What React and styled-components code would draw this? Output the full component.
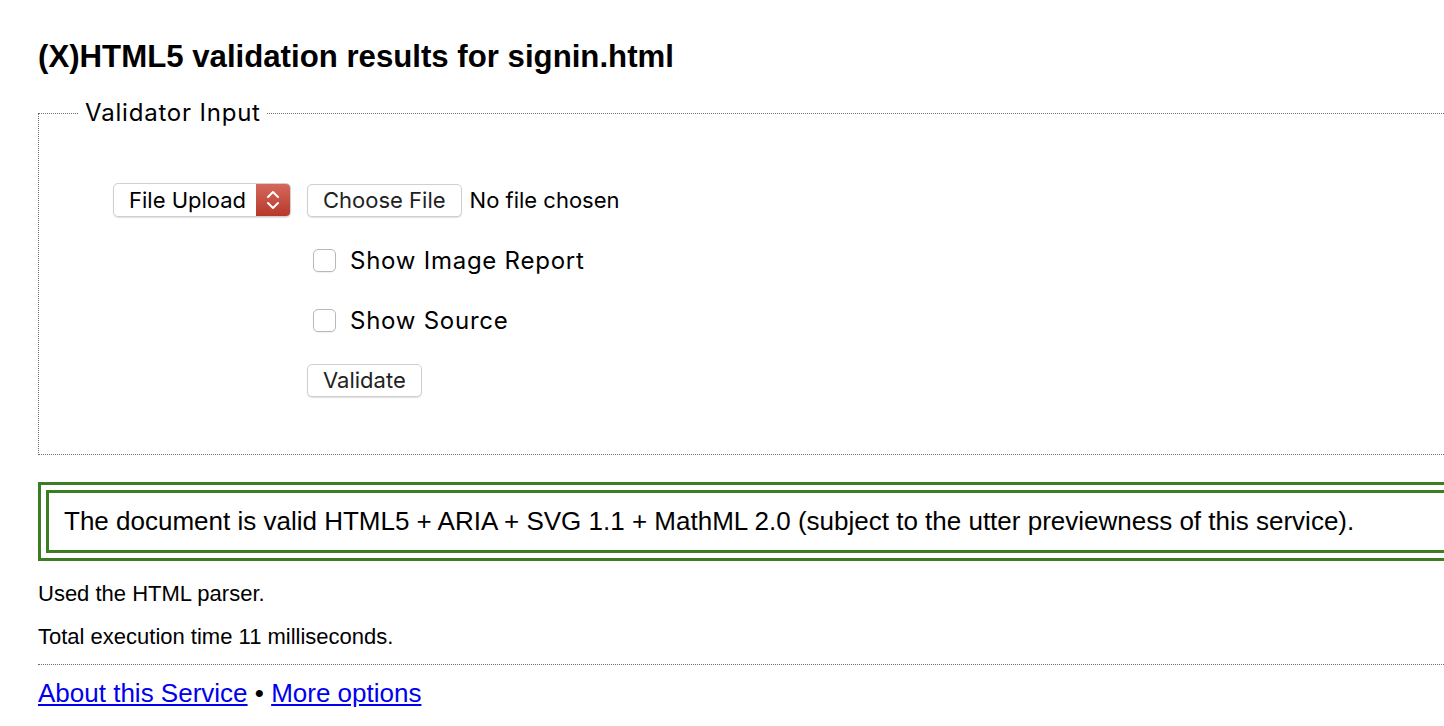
import React from 'react';
import styled, { createGlobalStyle } from "styled-components";

const Global = createGlobalStyle`
    html, body {
        margin: 0;
        padding: 0;
        overflow: hidden;
        background: #fff;
    }
    body {
        font-family: "Liberation Sans", Arial, sans-serif;
        color: #000;
    }
`;

const Page = styled.div`
    width: 1480px;
    padding: 39px 0 0 38px;
`;

const Title = styled.h1`
    margin: 0;
    font-size: 31.2px;
    line-height: 36px;
    font-weight: bold;
`;

const InputBox = styled.fieldset`
    margin: 24px 0 0 0;
    padding: 43px 0 44px 0;
    border: 1px dotted #707070;
    min-width: 0;
`;

const Legend = styled.legend`
    margin-left: 40px;
    padding: 0 6px;
    font-family: Inter, "Liberation Sans", sans-serif;
    font-size: 24px;
    letter-spacing: 0.8px;
    line-height: 28px;
`;

const Form = styled.div`
    margin-left: 74px;
    display: grid;
    grid-template-columns: 178px auto;
    grid-auto-rows: 60px;
    column-gap: 16px;
    align-items: center;
    font-family: Inter, "Liberation Sans", sans-serif;
`;

const Select = styled.div`
    display: flex;
    height: 34px;
    box-sizing: border-box;
    border: 1px solid #cfcfcf;
    border-radius: 5px;
    box-shadow: 0 1px 1px rgba(0,0,0,0.12);
    overflow: hidden;
`;

const SelectText = styled.span`
    flex: 1;
    padding-left: 15px;
    font-size: 22px;
    line-height: 32px;
`;

const SelectArrow = styled.span`
    width: 34px;
    display: flex;
    align-items: center;
    justify-content: center;
    background: linear-gradient(#d4685c, #b7382a);
`;

const Cell = styled.div`
    grid-column: 2;
    display: flex;
    align-items: center;
`;

const Button = styled.div`
    height: 33px;
    box-sizing: border-box;
    padding: 0 15px;
    border: 1px solid #cfcfcf;
    border-radius: 5px;
    box-shadow: 0 1px 1px rgba(0,0,0,0.12);
    font-size: 22px;
    line-height: 31px;
    color: #222;
    background: #fff;
`;

const Plain = styled.span`
    margin-left: 8px;
    font-size: 22px;
`;

const Check = styled.span`
    width: 23px;
    height: 23px;
    box-sizing: border-box;
    margin-left: 6px;
    border: 1px solid #b8b8b8;
    border-radius: 5px;
    box-shadow: 0 1px 1px rgba(0,0,0,0.06);
`;

const CheckLabel = styled.span`
    margin-left: 14px;
    font-size: 24px;
    letter-spacing: 0.75px;
`;

const Result = styled.div`
    margin-top: 27px;
    border: 3px solid #3b7d23;
    border-right: none;
    padding: 5px 0 5px 5px;
`;

const ResultInner = styled.p`
    margin: 0;
    border: 3px solid #3b7d23;
    border-right: none;
    padding: 13px 0 14px 15px;
    font-size: 26px;
    line-height: 30px;
`;

const Note = styled.p`
    margin: ${(p) => p.$top}px 0 0 0;
    font-size: 22px;
    line-height: 26px;
`;

const Rule = styled.hr`
    margin: 14px 0 0 0;
    border: none;
    border-top: 1px dotted #707070;
`;

const Footer = styled.p`
    margin: 13px 0 0 0;
    font-size: 26px;
    line-height: 30px;
`;

const Link = styled.a`
    color: #0000ee;
    text-decoration: underline;
`;

const Arrows = () => (
    <svg width="14" height="22" viewBox="0 0 14 22" fill="none" stroke="#fff" strokeWidth="2" strokeLinecap="round" strokeLinejoin="round">
        <polyline points="2,8 7,3 12,8" />
        <polyline points="2,14 7,19 12,14" />
    </svg>
);

const App = () => {
    return (
        <>
        <Global />
        <Page>
            <Title>(X)HTML5 validation results for signin.html</Title>

            <InputBox>
                <Legend>Validator Input</Legend>
                <Form>
                    <Select>
                        <SelectText>File Upload</SelectText>
                        <SelectArrow><Arrows /></SelectArrow>
                    </Select>
                    <Cell>
                        <Button>Choose File</Button>
                        <Plain>No file chosen</Plain>
                    </Cell>
                    <Cell>
                        <Check />
                        <CheckLabel>Show Image Report</CheckLabel>
                    </Cell>
                    <Cell>
                        <Check />
                        <CheckLabel>Show Source</CheckLabel>
                    </Cell>
                    <Cell>
                        <Button>Validate</Button>
                    </Cell>
                </Form>
            </InputBox>

            <Result>
                <ResultInner>The document is valid HTML5 + ARIA + SVG 1.1 + MathML 2.0 (subject to the utter previewness of this service).</ResultInner>
            </Result>

            <Note $top={20}>Used the HTML parser.</Note>
            <Note $top={17}>Total execution time 11 milliseconds.</Note>
            <Rule />
            <Footer>
                <Link href="#">About this Service</Link> • <Link href="#">More options</Link>
            </Footer>
        </Page>
        </>
    );
};

export default App;
